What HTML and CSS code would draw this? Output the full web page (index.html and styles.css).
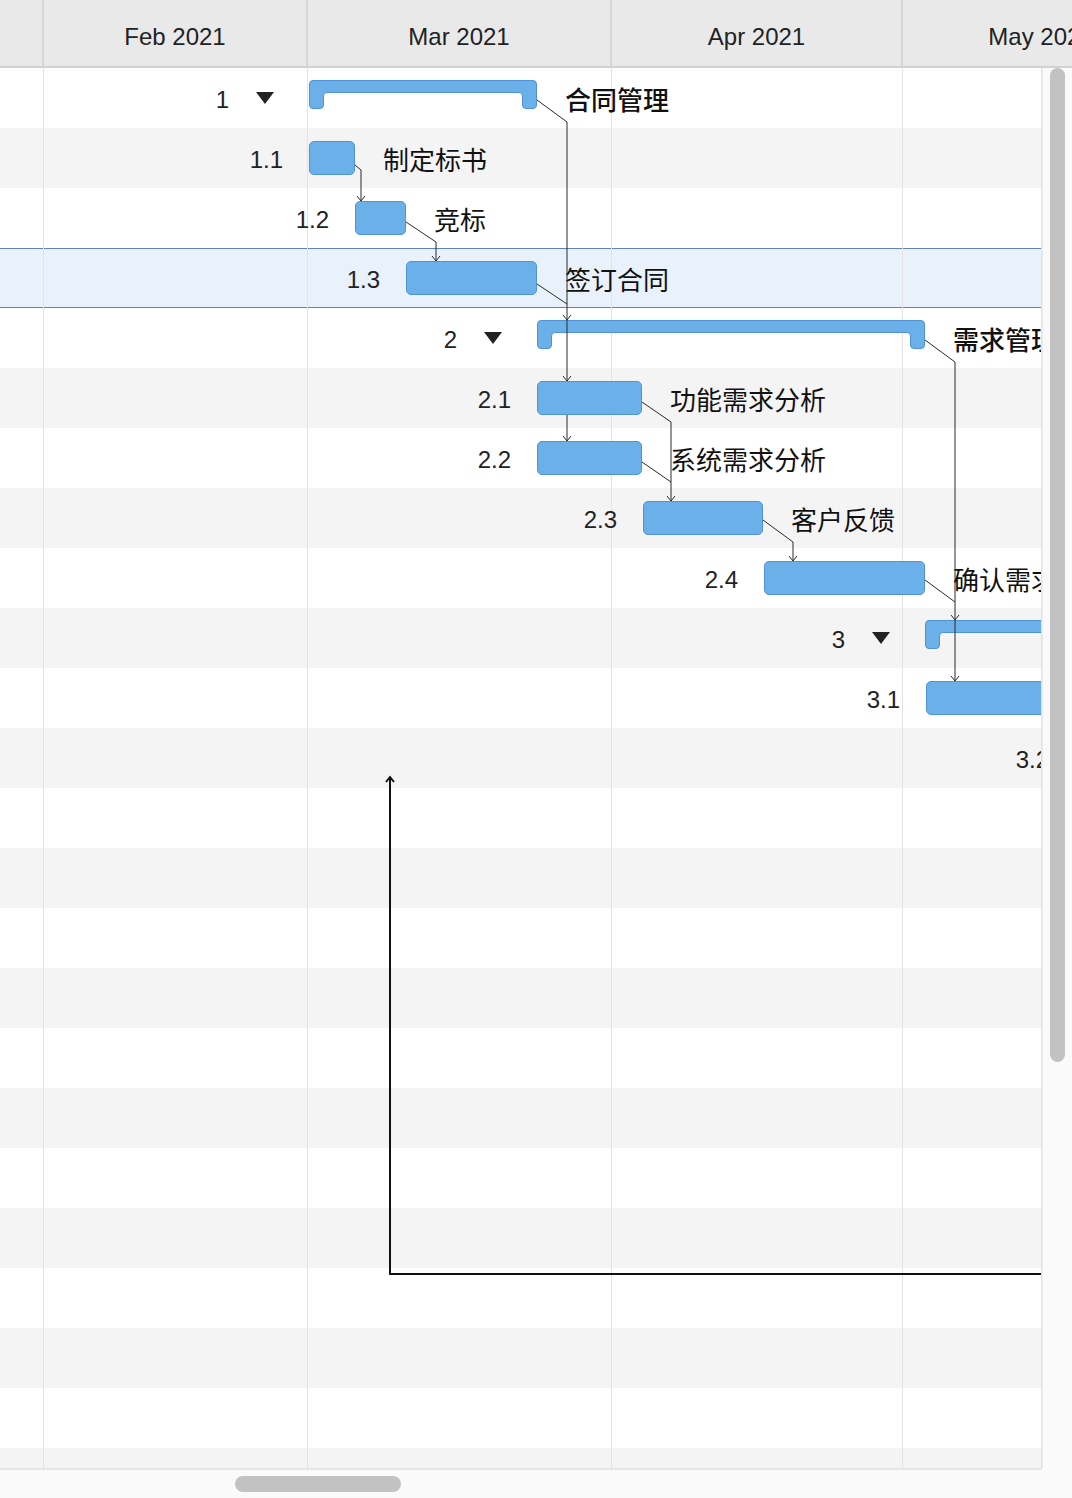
FILE: index.html
```html
<!DOCTYPE html>
<html lang="zh">
<head>
<meta charset="utf-8">
<title>Gantt</title>
<link rel="stylesheet" href="styles.css">
</head>
<body>
<div class="gantt">
  <div class="header">
    <div class="hcell m-pad"></div>
    <div class="hcell m-feb">Feb 2021</div>
    <div class="hcell m-mar">Mar 2021</div>
    <div class="hcell m-apr">Apr 2021</div>
    <div class="hcell m-may">May 2021</div>
  </div>

  <div class="body">
    <div class="rows">
      <div class="row">
        <div class="lead sum" style="width:309px"><span class="num">1</span><svg class="tri" width="18" height="12" viewBox="0 0 18 12"><polygon points="0,0 18,0 9,12"/></svg></div>
        <svg class="summary" width="228" height="29" viewBox="0 0 228 29"><path d="M0.5,4 Q0.5,0.5 4,0.5 H224 Q227.5,0.5 227.5,4 V25 Q227.5,28.5 224,28.5 H217 Q213.5,28.5 213.5,25 V16 Q213.5,12.5 210,12.5 H18 Q14.5,12.5 14.5,16 V25 Q14.5,28.5 11,28.5 H4 Q0.5,28.5 0.5,25 Z"/></svg>
        <span class="label bold">合同管理</span>
      </div>
      <div class="row">
        <div class="lead" style="width:309px"><span class="num">1.1</span></div>
        <div class="bar" style="width:46px"></div>
        <span class="label">制定标书</span>
      </div>
      <div class="row">
        <div class="lead" style="width:355px"><span class="num">1.2</span></div>
        <div class="bar" style="width:51px"></div>
        <span class="label">竞标</span>
      </div>
      <div class="row selected">
        <div class="lead" style="width:406px"><span class="num">1.3</span></div>
        <div class="bar" style="width:131px"></div>
        <span class="label">签订合同</span>
      </div>
      <div class="row">
        <div class="lead sum" style="width:537px"><span class="num">2</span><svg class="tri" width="18" height="12" viewBox="0 0 18 12"><polygon points="0,0 18,0 9,12"/></svg></div>
        <svg class="summary" width="388" height="29" viewBox="0 0 388 29"><path d="M0.5,4 Q0.5,0.5 4,0.5 H384 Q387.5,0.5 387.5,4 V25 Q387.5,28.5 384,28.5 H377 Q373.5,28.5 373.5,25 V16 Q373.5,12.5 370,12.5 H18 Q14.5,12.5 14.5,16 V25 Q14.5,28.5 11,28.5 H4 Q0.5,28.5 0.5,25 Z"/></svg>
        <span class="label bold">需求管理</span>
      </div>
      <div class="row">
        <div class="lead" style="width:537px"><span class="num">2.1</span></div>
        <div class="bar" style="width:105px"></div>
        <span class="label">功能需求分析</span>
      </div>
      <div class="row">
        <div class="lead" style="width:537px"><span class="num">2.2</span></div>
        <div class="bar" style="width:105px"></div>
        <span class="label">系统需求分析</span>
      </div>
      <div class="row">
        <div class="lead" style="width:643px"><span class="num">2.3</span></div>
        <div class="bar" style="width:120px"></div>
        <span class="label">客户反馈</span>
      </div>
      <div class="row">
        <div class="lead" style="width:764px"><span class="num">2.4</span></div>
        <div class="bar" style="width:161px"></div>
        <span class="label">确认需求</span>
      </div>
      <div class="row">
        <div class="lead sum" style="width:925px"><span class="num">3</span><svg class="tri" width="18" height="12" viewBox="0 0 18 12"><polygon points="0,0 18,0 9,12"/></svg></div>
        <svg class="summary" width="300" height="29" viewBox="0 0 300 29"><path d="M0.5,4 Q0.5,0.5 4,0.5 H296 Q299.5,0.5 299.5,4 V25 Q299.5,28.5 296,28.5 H289 Q285.5,28.5 285.5,25 V16 Q285.5,12.5 282,12.5 H18 Q14.5,12.5 14.5,16 V25 Q14.5,28.5 11,28.5 H4 Q0.5,28.5 0.5,25 Z"/></svg>
      </div>
      <div class="row">
        <div class="lead" style="width:926px"><span class="num">3.1</span></div>
        <div class="bar" style="width:200px"></div>
      </div>
      <div class="row">
        <div class="lead" style="width:1075px"><span class="num">3.2</span></div>
      </div>
      <div class="row"></div>
      <div class="row"></div>
      <div class="row"></div>
      <div class="row"></div>
      <div class="row"></div>
      <div class="row"></div>
      <div class="row"></div>
      <div class="row"></div>
      <div class="row"></div>
      <div class="row"></div>
      <div class="row"></div>
      <div class="row"></div>
    </div>

    <div class="gridlines">
      <div class="gcol m-pad"></div>
      <div class="gcol m-feb"></div>
      <div class="gcol m-mar"></div>
      <div class="gcol m-apr"></div>
    </div>

    <svg class="links" width="1042" height="1400" viewBox="0 0 1042 1400">
      <g class="link">
        <path d="M355,97 L361,102 L361,133"/><path d="M357,128 L361,133 L365,128"/>
        <path d="M406,154 L436,174 L436,193"/><path d="M432,188 L436,193 L440,188"/>
        <path d="M537,32 L567,54 L567,252"/><path d="M563,247 L567,252 L571,247"/>
        <path d="M537,216 L567,236"/>
        <path d="M567,252 L567,313"/><path d="M563,308 L567,313 L571,308"/>
        <path d="M567,347 L567,373"/><path d="M563,368 L567,373 L571,368"/>
        <path d="M642,334 L671,354 L671,433"/><path d="M667,428 L671,433 L675,428"/>
        <path d="M642,394 L671,414"/>
        <path d="M763,452 L793,474 L793,493"/><path d="M789,488 L793,493 L797,488"/>
        <path d="M925,272 L955,294 L955,552"/><path d="M951,547 L955,552 L959,547"/>
        <path d="M925,512 L955,534"/>
        <path d="M955,552 L955,613"/><path d="M951,608 L955,613 L959,608"/>
      </g>
      <g class="link thick">
        <path d="M390,709 L390,1206 L1042,1206"/><path d="M386,714 L390,709 L394,714"/>
      </g>
    </svg>
  </div>

  <div class="vscroll"><div class="vthumb"></div></div>
  <div class="hscroll"><div class="hthumb"></div></div>
  <div class="corner"></div>
</div>
</body>
</html>
```

FILE: styles.css
```css
html, body {
  margin: 0;
  padding: 0;
  background: #fff;
}

body {
  font-family: "Liberation Sans", "Noto Sans CJK SC", Arial, sans-serif;
  color: #222;
}

.gantt {
  display: grid;
  grid-template-columns: 1042px 30px;
  grid-template-rows: 68px 1400px 30px;
  width: 1072px;
  height: 1498px;
  overflow: hidden;
}

/* ---------- header ---------- */
.header {
  grid-column: 1 / 3;
  display: flex;
  background: #e9e9ea;
  border-bottom: 2px solid #d2d2d2;
  box-sizing: border-box;
  overflow: hidden;
}

.hcell {
  flex: none;
  box-sizing: border-box;
  border-right: 2px solid #d6d6d6;
  display: flex;
  align-items: center;
  justify-content: center;
  padding-top: 8px;
  font-size: 24px;
  color: #222;
  white-space: nowrap;
}

.m-pad { width: 44px; }
.m-feb { width: 264px; }
.m-mar { width: 304px; }
.m-apr { width: 291px; }
.m-may { width: 276px; border-right: none; }

/* ---------- body ---------- */
.body {
  position: relative;
  overflow: hidden;
  border-right: 1px solid #e2e2e2;
}

.rows {
  display: flex;
  flex-direction: column;
}

.row {
  flex: none;
  height: 60px;
  box-sizing: border-box;
  display: flex;
  align-items: center;
  background: #fff;
  white-space: nowrap;
}

.row:nth-child(even) {
  background: #f4f4f5;
}

.row.selected {
  background: #e9f1fa;
  border-top: 1px solid #5e82ba;
  border-bottom: 1px solid #5e82ba;
}

.lead {
  flex: none;
  box-sizing: border-box;
  display: flex;
  align-items: center;
  justify-content: flex-end;
  padding-right: 26px;
  position: relative;
  z-index: 2;
}

.lead.sum {
  padding-right: 35px;
}

.num {
  font-size: 24px;
  color: #222;
  line-height: 1;
  padding-top: 4px;
}

.lead.sum .num {
  margin-right: 27px;
}

.tri {
  flex: none;
  fill: #222;
}

.bar {
  flex: none;
  height: 34px;
  box-sizing: border-box;
  background: #6cb0ea;
  border: 1px solid #4f93d5;
  border-radius: 5px;
  position: relative;
  z-index: 2;
}

.summary {
  flex: none;
  align-self: flex-start;
  margin-top: 12px;
  fill: #6cb0ea;
  stroke: #4f93d5;
  stroke-width: 1;
  position: relative;
  z-index: 2;
}

.label {
  flex: none;
  margin-left: 28px;
  padding-top: 5px;
  font-size: 26px;
  color: #111;
  line-height: 1;
  position: relative;
  z-index: 2;
}

.label.bold {
  font-weight: 500;
}

/* vertical grid lines drawn over the row stripes */
.gridlines {
  position: absolute;
  top: 0;
  left: 0;
  bottom: 0;
  display: flex;
  z-index: 1;
  pointer-events: none;
}

.gcol {
  flex: none;
  box-sizing: border-box;
  border-right: 1px solid #e3e3e4;
  height: 100%;
}

/* dependency links */
.links {
  position: absolute;
  top: 0;
  left: 0;
  z-index: 3;
  pointer-events: none;
}

.link path {
  fill: none;
  stroke: #2a2a2a;
  stroke-width: 1;
}

.link.thick path {
  stroke: #111;
  stroke-width: 2;
}

/* ---------- scrollbars ---------- */
.vscroll {
  background: #fafafa;
  border-left: 1px solid #ececec;
  box-sizing: border-box;
  padding-left: 7px;
}

.vthumb {
  width: 15px;
  height: 994px;
  border-radius: 8px;
  background: #c2c2c2;
}

.hscroll {
  background: #fafafa;
  border-top: 2px solid #e6e6e6;
  box-sizing: border-box;
  padding-top: 6px;
  padding-left: 235px;
}

.hthumb {
  width: 166px;
  height: 16px;
  border-radius: 8px;
  background: #c2c2c2;
}

.corner {
  background: #fafafa;
}
```
